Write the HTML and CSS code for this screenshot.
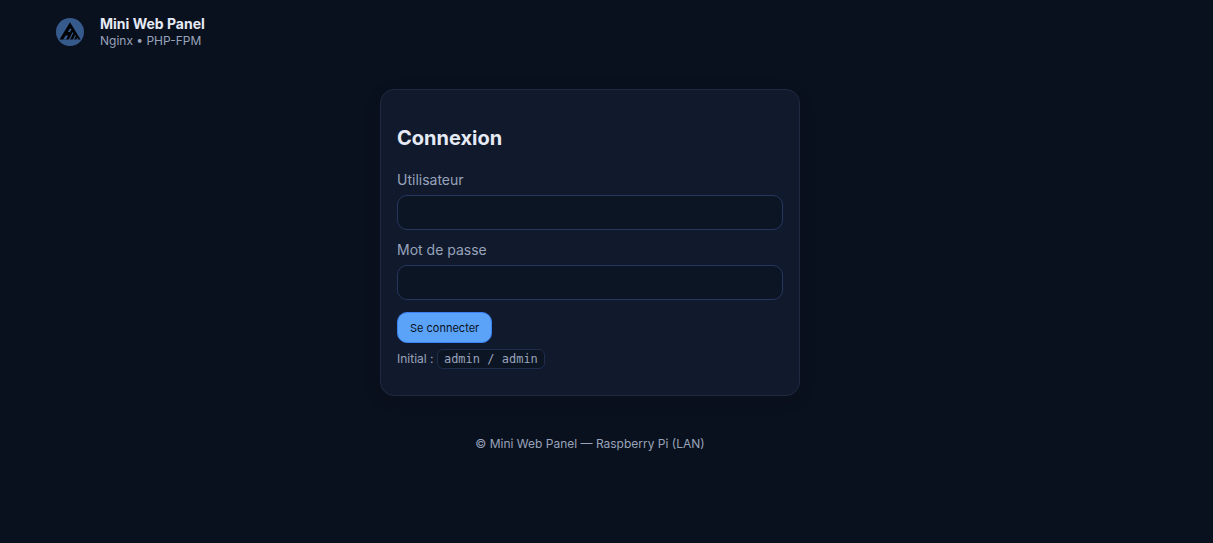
FILE: index.html
```html
<!DOCTYPE html>
<html lang="fr">
<head>
<meta charset="utf-8">
<meta name="viewport" content="width=device-width, initial-scale=1">
<title>Mini Web Panel</title>
<link rel="stylesheet" href="styles.css">
</head>
<body>
<div class="page">
  <header class="header">
    <svg class="logo" viewBox="0 0 28 28" aria-hidden="true">
      <circle cx="14" cy="14" r="14" fill="#375a8c"/>
      <path fill="#020305" d="M14 4.300 24.600 21.500H3.500Z"/>
      <path fill="#375a8c" d="M7.200 21.600 9.600 17.600H12L10 21.600ZM11.800 14 14 10.600 15.600 11.200 14 14Z"/>
      <path fill="none" stroke="#375a8c" stroke-width="1.100" d="M13.200 22 17 14.500M17.300 22 19.500 17.500M20.700 22 21.800 20"/>
    </svg>
    <div class="brand">
      <div class="brand-name">Mini Web Panel</div>
      <div class="small">Nginx • PHP-FPM</div>
    </div>
  </header>
  <main class="main">
    <section class="card">
      <h2 class="title">Connexion</h2>
      <form class="form">
        <label class="label" for="user">Utilisateur</label>
        <input class="input" id="user" type="text" name="user">
        <label class="label" for="password">Mot de passe</label>
        <input class="input" id="password" type="password" name="password">
        <button class="button" type="submit">Se connecter</button>
      </form>
      <p class="hint small">Initial : <code class="code">admin / admin</code></p>
    </section>
  </main>
  <footer class="footer small">© Mini Web Panel — Raspberry Pi (LAN)</footer>
</div>
</body>
</html>
```
FILE: styles.css
```css
* { box-sizing: border-box; }

body {
  margin: 0;
  padding-right: 33px;
  background: #0a111e;
  color: #e6eaf5;
  font: 14px/20px Inter, "Liberation Sans", sans-serif;
}

.page {
  max-width: 1100px;
  margin: 0 auto;
}

.header {
  display: flex;
  align-items: center;
  gap: 16px;
  padding: 15px 16px;
}

.logo { width: 28px; height: 28px; }

.brand-name { font-weight: 700; line-height: 18px; }

.small {
  color: #98a3bb;
  font-size: 12px;
  line-height: 16px;
}

.main { padding: 25px 16px 16px; }

.card {
  max-width: 420px;
  margin: 0 auto;
  padding: 35px 16px 26px;
  background: #111a2c;
  border: 1px solid #1e2942;
  border-radius: 14px;
  box-shadow: 0 4px 16px rgba(0, 0, 0, 0.15);
}

.title {
  margin: 0 0 19px;
  font-size: 20px;
  line-height: 26px;
  font-weight: 700;
}

.form {
  display: flex;
  flex-direction: column;
  align-items: flex-start;
}

.label { margin-bottom: 5px; color: #98a3bb; }

.input {
  width: 100%;
  height: 35px;
  margin-bottom: 10px;
  padding: 8px 10px;
  background: #0c1524;
  border: 1px solid #26365f;
  border-radius: 10px;
  color: inherit;
  font: inherit;
}

.button {
  margin: 2px 0 6px;
  padding: 8px 12px 6px;
  background: #5ba3f8;
  border: 1px solid #3b82f6;
  border-radius: 10px;
  color: #08111f;
  font: 11px/15px Inter, "Liberation Sans", sans-serif;
}

.hint { margin: 0; line-height: 20px; }

.code {
  display: inline-block;
  padding: 0 6px;
  background: #0c1524;
  border: 1px solid #1f2c4c;
  border-radius: 6px;
  font: 12px/18px "DejaVu Sans Mono", monospace;
}

.footer { padding: 24px 16px; text-align: center; }
```
